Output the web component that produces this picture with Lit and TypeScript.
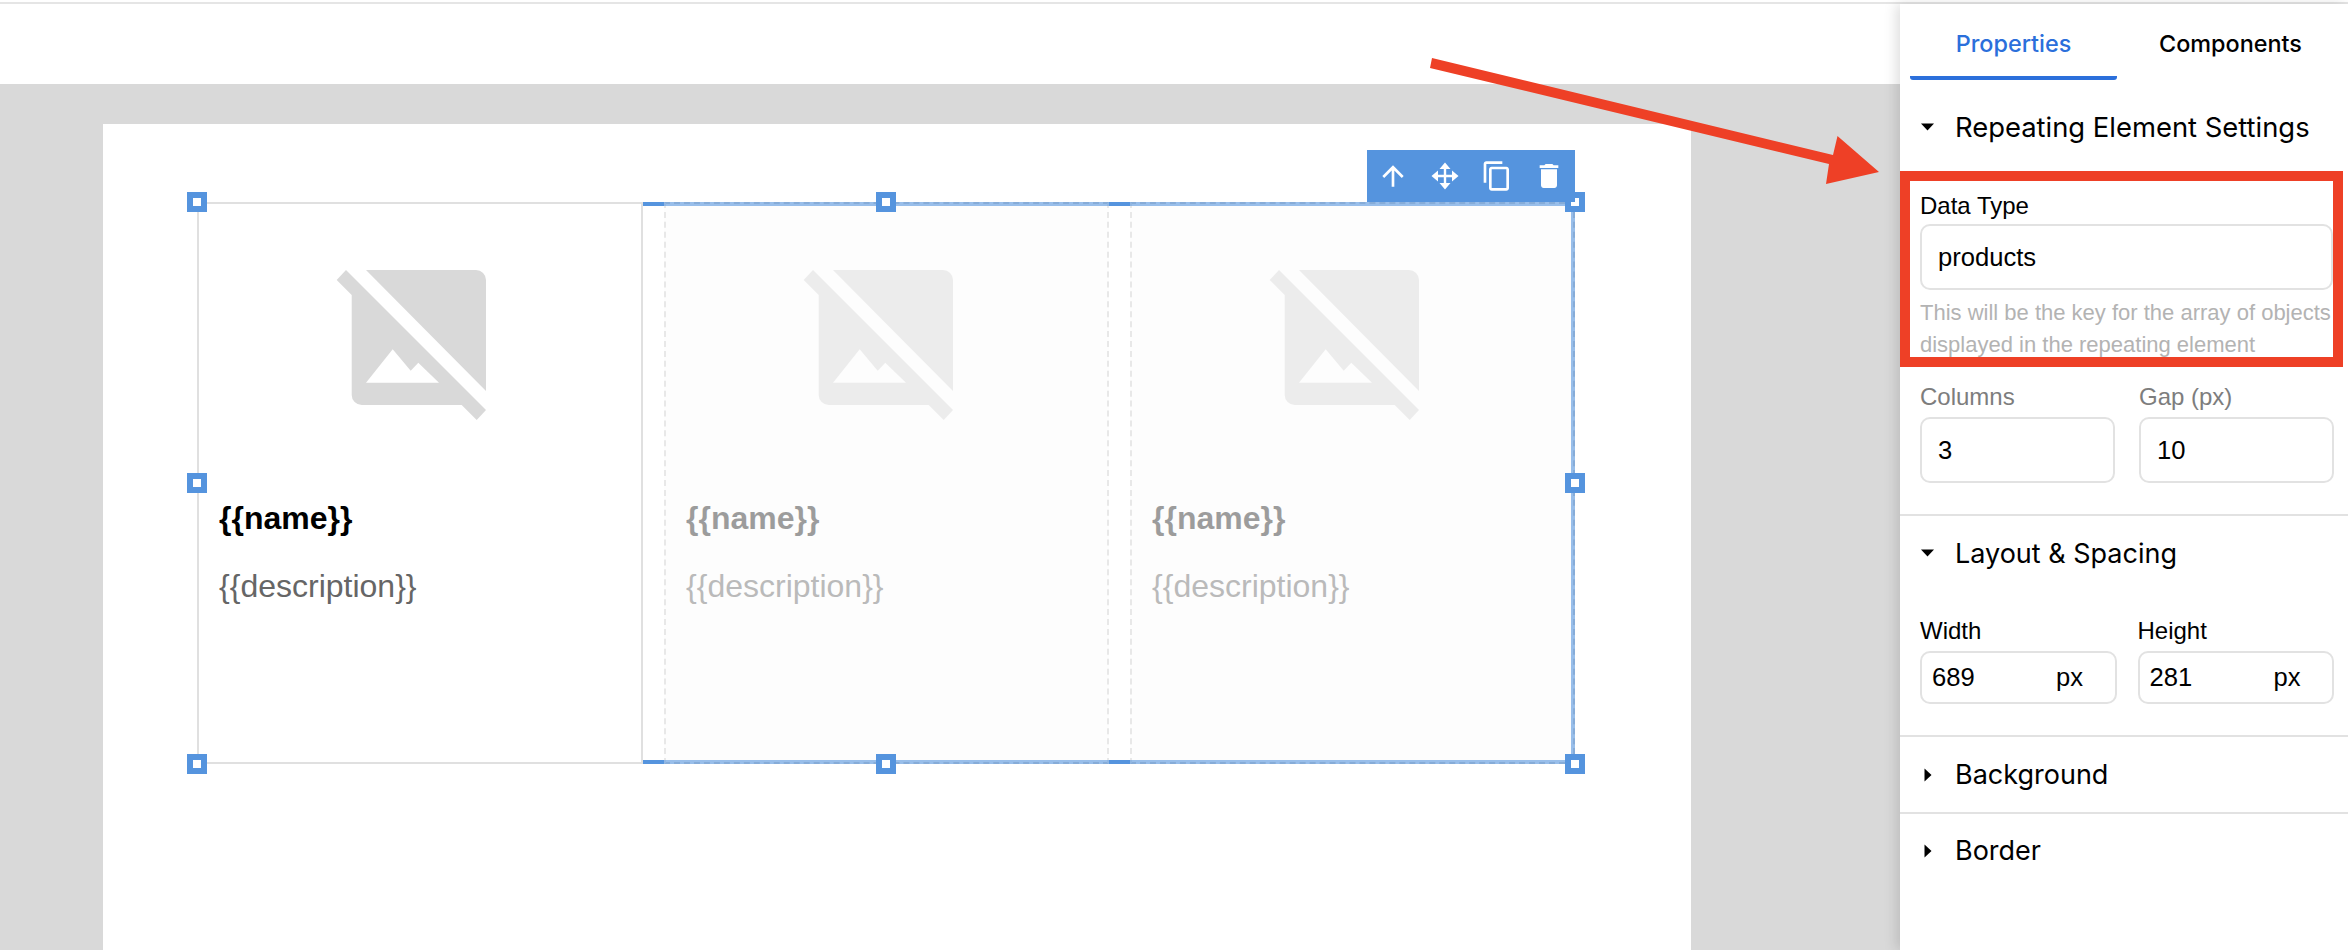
import { LitElement, html, css, svg } from "lit";
import { customElement } from "lit/decorators.js";

const noImage = svg`<path fill-rule="evenodd" d="M36 22H146a10 10 0 0 1 10 10V143ZM16 22L156 162L146.700 172L131.700 157H31.700a10 10 0 0 1-10-10V47L6.700 32ZM36 134.700L62.700 101.300L80.700 122.700L88.300 114.700L109 134.700Z"/>`;

@customElement("app-root")
export class AppRoot extends LitElement {
  static styles = css`
    :host { display: block; position: relative; width: 2348px; height: 950px; overflow: hidden; background: #fff; font-family: "Liberation Sans", Arial, sans-serif; color: #000; }
    .rule { height: 2px; margin-top: 2px; background: #e5e5e5; }
    .main { display: grid; grid-template-columns: 1900px 448px; height: 946px; }
    .left { display: flex; flex-direction: column; min-width: 0; }
    .topbar { height: 80px; background: #fff; }
    .stage { flex: 1; background: #d9d9d9; padding: 40px 209px 0 103px; display: flex; }
    .canvas { flex: 1; background: #fff; padding: 78px 0 0 94px; }

    .repeater { position: relative; display: flex; width: 1378px; height: 562px; }
    .cell { box-sizing: border-box; height: 562px; padding-top: 44px; }
    .cell.first { width: 446px; border: 2px solid #e0e0e0; }
    .cell.ghost { width: 445px; border: 2px dashed #e8e8e8; border-top-color: #d0d0d0; border-bottom-color: #d0d0d0; background: #fdfdfd; }
    .cell.g2 { border-right-color: #d0d0d0; }
    .gap { box-sizing: border-box; width: 21px; height: 562px; border-top: 4px solid #5594de; border-bottom: 4px solid #5594de; }
    .ghost .pic { opacity: .45; }
    .ghost .name { opacity: .38; }
    .ghost .desc { opacity: .44; }
    .pic { display: flex; justify-content: center; }
    .pic svg { width: 180px; height: 180px; fill: #d9d9d9; display: block; }
    .name { margin: 70px 0 0 20px; font-size: 32px; line-height: 40px; font-weight: 700; color: #000; }
    .desc { margin: 28px 0 0 20px; font-size: 32px; line-height: 40px; color: #666; }

    .band { position: absolute; left: 446px; right: 0; top: 0; bottom: 0; border: 4px solid rgba(85,148,222,.6); border-left: 0; pointer-events: none; }
    .handle { position: absolute; box-sizing: border-box; width: 20px; height: 20px; margin: -10px 0 0 -10px; border: 6px solid #5594de; background: #fff; }
    .tl { left: 0; top: 0; } .tc { left: 689px; top: 0; } .tr { left: 1378px; top: 0; }
    .ml { left: 0; top: 281px; } .mr { left: 1378px; top: 281px; }
    .bl { left: 0; top: 562px; } .bc { left: 689px; top: 562px; } .br { left: 1378px; top: 562px; }
    .toolbar { position: absolute; right: 0; top: -52px; height: 52px; display: flex; align-items: center; gap: 20px; padding: 0 10px; background: #5594de; }
    .toolbar svg { width: 32px; height: 32px; fill: #fff; display: block; }

    .panel { position: relative; background: #fff; box-shadow: -4px 0 12px rgba(0,0,0,.13); display: flex; flex-direction: column; }
    .tabs { display: flex; height: 76px; padding-left: 10px; font-family: Inter, sans-serif; font-size: 23.400px; font-weight: 500; }
    .tab { box-sizing: border-box; display: flex; align-items: center; justify-content: center; padding-top: 6px; border-bottom: 4px solid transparent; }
    .tab.on { width: 207px; color: #2b6fdb; border-bottom-color: #2b6fdb; border-radius: 0 0 3px 3px; }
    .tab.off { width: 227px; }
    .head { display: flex; align-items: center; height: 74px; padding-left: 20px; font-family: Inter, sans-serif; font-size: 27px; }
    .head.first { margin-top: 10px; font-size: 27.400px; }
    .head.closed { height: 75px; }
    .head.closed.last { height: 73px; }
    .caret { width: 35px; flex: none; }
    .caret svg { display: block; width: 16px; height: 16px; fill: #000; }
    .note { box-sizing: border-box; width: 443px; height: 196px; border: 10px solid #ee4026; padding: 10px 0 0 10px; margin-top: 7px; overflow: hidden; }
    label { display: block; font-size: 24px; line-height: 30px; }
    .muted { color: #7d7d7d; }
    input { box-sizing: border-box; width: 100%; display: block; border: 2px solid #e2e2e2; border-radius: 10px; background: #fff; font: 25.600px "Liberation Sans", Arial, sans-serif; color: #000; padding: 0 0 0 16px; outline: none; }
    .tall { height: 66px; }
    .note label { margin-bottom: 3px; }
    .help { margin-top: 7px; font-size: 22px; line-height: 32px; color: #b3b3b3; white-space: nowrap; }
    .pair { display: flex; gap: 24px; padding: 15px 14px 0 20px; }
    .pair > div { flex: 1; min-width: 0; }
    .pair label { margin-bottom: 5px; }
    .divider { height: 2px; background: #e2e2e2; }
    .pair.dims { gap: 21px; padding-top: 26px; }
    .unit { position: relative; }
    .unit input { height: 53px; padding-left: 10px; }
    .unit span { position: absolute; left: 136px; top: 0; font-size: 25.600px; line-height: 53px; }
    .pad-b { height: 31px; }
  `;

  private cellContent() {
    return html`<div class="content">
      <div class="pic"><svg viewBox="0 0 180 180">${noImage}</svg></div>
      <div class="name">{{name}}</div>
      <div class="desc">{{description}}</div>
    </div>`;
  }

  private caret(open: boolean) {
    return html`<span class="caret"><svg viewBox="0 0 16 16">${open
      ? svg`<path d="M1 4.500h13L7.500 11.500z"/>`
      : svg`<path d="M4.500 1.500v13l7-6.500z"/>`}</svg></span>`;
  }

  render() {
    return html`
      <div class="rule"></div>
      <div class="main">
        <div class="left">
          <div class="topbar"></div>
          <div class="stage">
            <div class="canvas">
              <div class="repeater">
                <div class="cell first">${this.cellContent()}</div>
                <div class="gap"></div>
                <div class="cell ghost g1">${this.cellContent()}</div>
                <div class="gap"></div>
                <div class="cell ghost g2">${this.cellContent()}</div>
                <div class="band"></div>
                ${["tl","tc","tr","ml","mr","bl","bc","br"].map((p) => html`<div class="handle ${p}"></div>`)}
                <div class="toolbar">
                  <svg viewBox="0 0 24 24"><path d="M4 12l1.410 1.410L11 7.830V20h2V7.830l5.580 5.590L20 12l-8-8-8 8z"/></svg>
                  <svg viewBox="0 0 32 32"><path d="M16 2.500l5.500 6.500h-4.300v5.800h5.800v-4.300l6.500 5.500-6.500 5.500v-4.300h-5.800v5.800h4.300l-5.500 6.500-5.500-6.500h4.300v-5.800H9v4.300L2.500 16 9 10.500v4.300h5.800V9h-4.300z"/></svg>
                  <svg viewBox="0 0 24 24"><path d="M16 1H4c-1.100 0-2 .9-2 2v14h2V3h12V1zm3 4H8c-1.100 0-2 .9-2 2v14c0 1.100.9 2 2 2h11c1.100 0 2-.9 2-2V7c0-1.100-.9-2-2-2zm0 16H8V7h11v14z"/></svg>
                  <svg viewBox="0 0 24 24"><path d="M6 19c0 1.100.9 2 2 2h8c1.100 0 2-.9 2-2V7H6v12zM19 4h-3.500l-1-1h-5l-1 1H5v2h14V4z"/></svg>
                </div>
              </div>
            </div>
          </div>
        </div>
        <aside class="panel">
          <div class="tabs">
            <div class="tab on">Properties</div>
            <div class="tab off">Components</div>
          </div>
          <div class="head first">${this.caret(true)}Repeating Element Settings</div>
          <div class="note">
            <label>Data Type</label>
            <input class="tall" .value=${"products"} />
            <div class="help">This will be the key for the array of objects<br />displayed in the repeating element</div>
          </div>
          <div class="pair">
            <div><label class="muted">Columns</label><input class="tall" .value=${"3"} /></div>
            <div><label class="muted">Gap (px)</label><input class="tall" .value=${"10"} /></div>
          </div>
          <div class="pad-b"></div>
          <div class="divider"></div>
          <div class="head">${this.caret(true)}Layout &amp; Spacing</div>
          <div class="pair dims">
            <div><label>Width</label><div class="unit"><input .value=${"689"} /><span>px</span></div></div>
            <div><label>Height</label><div class="unit"><input .value=${"281"} /><span>px</span></div></div>
          </div>
          <div class="pad-b"></div>
          <div class="divider"></div>
          <div class="head closed">${this.caret(false)}Background</div>
          <div class="divider"></div>
          <div class="head closed last">${this.caret(false)}Border</div>
        </aside>
      </div>
      <svg class="overlay" width="2348" height="950" viewBox="0 0 2348 950" style="position:absolute;left:0;top:0;pointer-events:none">
        <polygon fill="#ee4026" points="1432,58 1833,155 1837.500,136 1879,172 1826,184 1829,164 1430,68"></polygon>
      </svg>
    `;
  }
}
